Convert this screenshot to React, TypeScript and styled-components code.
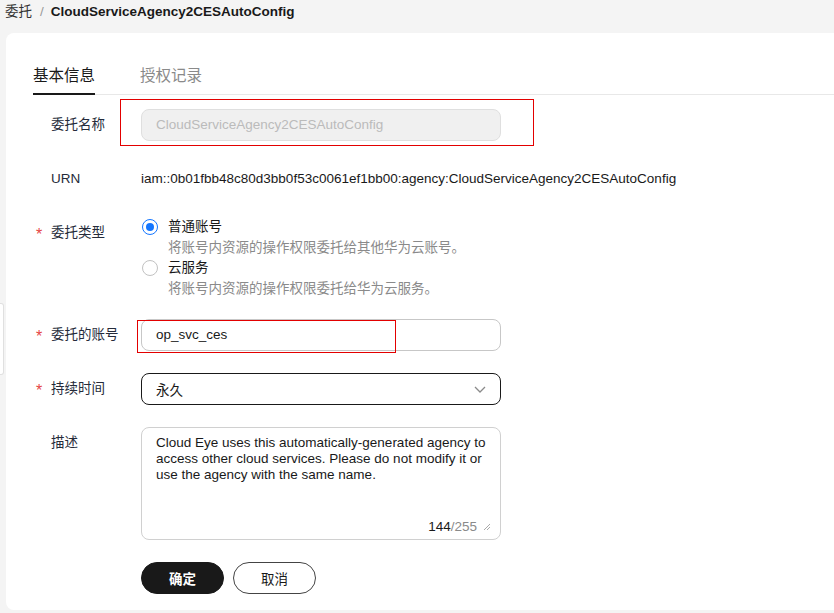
import React from "react";
import styled, { createGlobalStyle } from "styled-components";

const Global = createGlobalStyle`
  html, body { margin: 0; padding: 0; background: #f4f4f4; }
  body {
    font-family: "Liberation Sans", "Noto Sans CJK SC", Arial, sans-serif;
    font-size: 13.5px;
    color: #191919;
    width: 834px;
    height: 613px;
    overflow: hidden;
  }
`;

const Page = styled.div`
  position: relative;
  height: 613px;
  display: flex;
  flex-direction: column;
`;

const Breadcrumb = styled.div`
  height: 33px;
  display: flex;
  align-items: flex-start;
  padding: 3px 0 0 5px;
  box-sizing: border-box;
  line-height: 18px;
  font-size: 13.5px;
`;

const Crumb = styled.span`
  color: #333;
`;

const Sep = styled.span`
  color: #999;
  margin: 0 7px 0 8px;
`;

const CrumbCurrent = styled.span`
  font-weight: bold;
  color: #191919;
`;

const Card = styled.div`
  margin-left: 6px;
  height: 577px;
  background: #fff;
  border-radius: 8px 0 0 8px;
  padding-top: 20px;
  box-sizing: border-box;
`;

const TabList = styled.div`
  display: flex;
  gap: 45px;
  margin-left: 27px;
  border-bottom: 1px solid #e8e8e8;
`;

const Tab = styled.div<{ $active?: boolean }>`
  position: relative;
  font-size: 15.5px;
  line-height: 24px;
  padding: 11px 0 6px;
  color: ${(p) => (p.$active ? "#191919" : "#8a8a8a")};
  &::after {
    content: "";
    display: ${(p) => (p.$active ? "block" : "none")};
    position: absolute;
    left: 0;
    right: 0;
    bottom: -1px;
    height: 2px;
    background: #191919;
  }
`;

const Form = styled.div`
  margin-top: 14px;
  padding-left: 45px;
  display: flex;
  flex-direction: column;
  gap: 22px;
`;

const Row = styled.div<{ $tight?: boolean }>`
  display: flex;
  align-items: flex-start;
  margin-bottom: ${(p) => (p.$tight ? "-2px" : "0")};
`;

const Label = styled.div<{ $required?: boolean }>`
  position: relative;
  width: 90px;
  flex: none;
  line-height: 32px;
  color: #252b3a;
  &::before {
    content: "*";
    display: ${(p) => (p.$required ? "block" : "none")};
    position: absolute;
    left: -15px;
    top: 2px;
    color: #e54545;
    font-size: 16px;
  }
`;

const Control = styled.div`
  position: relative;
  width: 360px;
`;

const Input = styled.div<{ $disabled?: boolean }>`
  box-sizing: border-box;
  height: 32px;
  line-height: 30px;
  padding: 0 14px;
  border-radius: 8px;
  border: 1px solid ${(p) => (p.$disabled ? "#dfdfdf" : "#c7c7c7")};
  background: ${(p) => (p.$disabled ? "#f0f0f0" : "#fff")};
  color: ${(p) => (p.$disabled ? "#bbbbbb" : "#191919")};
`;

const Select = styled.div`
  box-sizing: border-box;
  height: 32px;
  padding: 0 14px;
  border-radius: 8px;
  border: 1px solid #191919;
  display: flex;
  align-items: center;
  justify-content: space-between;
`;

const Value = styled.div`
  line-height: 32px;
  color: #191919;
  white-space: nowrap;
`;

const Highlight = styled.div<{ $l: number; $t: number; $w: number; $h: number }>`
  position: absolute;
  left: ${(p) => p.$l}px;
  top: ${(p) => p.$t}px;
  width: ${(p) => p.$w}px;
  height: ${(p) => p.$h}px;
  border: 1px solid #e30000;
  box-sizing: border-box;
  pointer-events: none;
`;

const RadioGroup = styled.div`
  display: flex;
  flex-direction: column;
`;

const RadioItem = styled.div`
  display: flex;
  align-items: center;
  gap: 10px;
  height: 20px;
  margin-left: 1px;
`;

const RadioCircle = styled.span<{ $checked?: boolean }>`
  box-sizing: border-box;
  width: 16px;
  height: 16px;
  border-radius: 50%;
  border: 1px solid ${(p) => (p.$checked ? "#1476ff" : "#c2c2c2")};
  display: flex;
  align-items: center;
  justify-content: center;
  background: #fff;
  &::after {
    content: "";
    display: ${(p) => (p.$checked ? "block" : "none")};
    width: 8px;
    height: 8px;
    border-radius: 50%;
    background: #1476ff;
  }
`;

const RadioText = styled.span`
  color: #191919;
  line-height: 20px;
`;

const RadioDesc = styled.div`
  color: #8a8a8a;
  line-height: 20px;
  padding-left: 27px;
  margin-top: 1px;
`;

const TextArea = styled.div`
  box-sizing: border-box;
  position: relative;
  height: 113px;
  border-radius: 8px;
  border: 1px solid #d0d0d0;
  padding: 7px 14px;
`;

const AreaText = styled.div`
  white-space: pre;
  line-height: 16px;
  color: #191919;
`;

const Counter = styled.div`
  position: absolute;
  right: 9px;
  bottom: 4px;
  display: flex;
  align-items: center;
  gap: 6px;
  line-height: 16px;
`;

const Count = styled.span`
  color: #191919;
`;

const Max = styled.span`
  color: #8a8a8a;
`;

const Buttons = styled.div`
  display: flex;
  gap: 9px;
`;

const Button = styled.button<{ $primary?: boolean }>`
  box-sizing: border-box;
  width: 83px;
  height: 32px;
  border-radius: 16px;
  border: 1px solid ${(p) => (p.$primary ? "#191919" : "#444")};
  background: ${(p) => (p.$primary ? "#191919" : "#fff")};
  color: ${(p) => (p.$primary ? "#fff" : "#191919")};
  font-family: inherit;
  font-size: 13.5px;
  font-weight: ${(p) => (p.$primary ? "bold" : "normal")};
  padding: 0;
  cursor: pointer;
`;

const SideHandle = styled.div`
  position: absolute;
  left: 0;
  top: 303px;
  width: 3px;
  height: 70px;
  background: #fff;
  border: 1px solid #e0e0e0;
  border-left: none;
  border-radius: 0 3px 3px 0;
`;

const Chevron = () => (
  <svg width="12" height="7" viewBox="0 0 12 7" fill="none">
    <polyline points="1,1 6,6 11,1" stroke="#8a8a8a" strokeWidth="1.3" />
  </svg>
);

const ResizeIcon = () => (
  <svg width="8" height="8" viewBox="0 0 8 8" fill="none">
    <line x1="1" y1="7" x2="7" y2="1" stroke="#aaa" strokeWidth="1" />
    <line x1="4" y1="7" x2="7" y2="4" stroke="#aaa" strokeWidth="1" />
  </svg>
);

export default function App() {
  return (
    <Page>
      <Global />
      <Breadcrumb>
        <Crumb>委托</Crumb>
        <Sep>/</Sep>
        <CrumbCurrent>CloudServiceAgency2CESAutoConfig</CrumbCurrent>
      </Breadcrumb>
      <Card>
        <TabList>
          <Tab $active>基本信息</Tab>
          <Tab>授权记录</Tab>
        </TabList>
        <Form>
          <Row>
            <Label>委托名称</Label>
            <Control>
              <Input $disabled>CloudServiceAgency2CESAutoConfig</Input>
              <Highlight $l={-21} $t={-10} $w={414} $h={47} />
            </Control>
          </Row>
          <Row>
            <Label>URN</Label>
            <Value>iam::0b01fbb48c80d3bb0f53c0061ef1bb00:agency:CloudServiceAgency2CESAutoConfig</Value>
          </Row>
          <Row $tight>
            <Label $required>委托类型</Label>
            <RadioGroup>
              <RadioItem>
                <RadioCircle $checked />
                <RadioText>普通账号</RadioText>
              </RadioItem>
              <RadioDesc>将账号内资源的操作权限委托给其他华为云账号。</RadioDesc>
              <RadioItem>
                <RadioCircle />
                <RadioText>云服务</RadioText>
              </RadioItem>
              <RadioDesc>将账号内资源的操作权限委托给华为云服务。</RadioDesc>
            </RadioGroup>
          </Row>
          <Row>
            <Label $required>委托的账号</Label>
            <Control>
              <Input>op_svc_ces</Input>
              <Highlight $l={-4} $t={1} $w={259} $h={33} />
            </Control>
          </Row>
          <Row>
            <Label $required>持续时间</Label>
            <Control>
              <Select>
                <span>永久</span>
                <Chevron />
              </Select>
            </Control>
          </Row>
          <Row>
            <Label>描述</Label>
            <Control>
              <TextArea>
                <AreaText>
                  {"Cloud Eye uses this automatically-generated agency to\naccess other cloud services. Please do not modify it or\nuse the agency with the same name."}
                </AreaText>
                <Counter>
                  <span>
                    <Count>144</Count>
                    <Max>/255</Max>
                  </span>
                  <ResizeIcon />
                </Counter>
              </TextArea>
            </Control>
          </Row>
          <Row>
            <Label />
            <Buttons>
              <Button $primary>确定</Button>
              <Button>取消</Button>
            </Buttons>
          </Row>
        </Form>
      </Card>
      <SideHandle />
    </Page>
  );
}
